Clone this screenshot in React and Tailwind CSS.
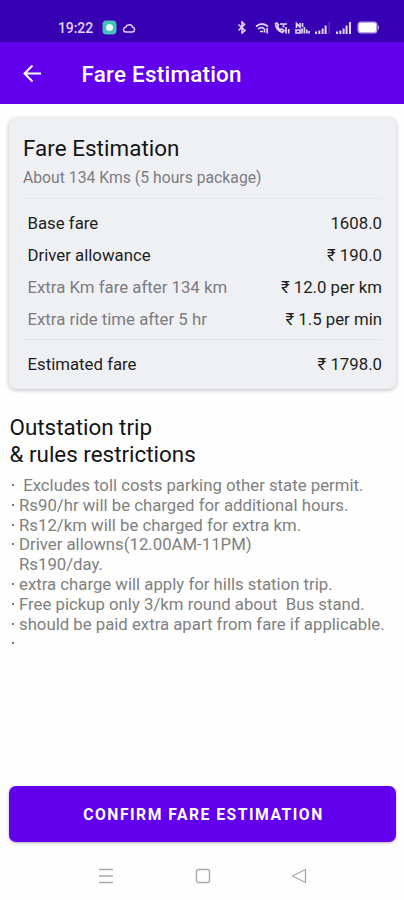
const fareRows = [
  { label: 'Base fare', value: '1608.0' },
  { label: 'Driver allowance', value: '₹ 190.0' },
  { label: 'Extra Km fare after 134 km', value: '₹ 12.0 per km', muted: true },
  { label: 'Extra ride time after 5 hr', value: '₹ 1.5 per min', muted: true },
];

const rules = [
  '\u00a0Excludes toll costs parking other state permit.',
  'Rs90/hr will be charged for additional hours.',
  'Rs12/km will be charged for extra km.',
  'Driver allowns(12.00AM-11PM)\nRs190/day.',
  'extra charge will apply for hills station trip.',
  'Free pickup only 3/km round about  Bus stand.',
  'should be paid extra apart from fare if applicable.',
  '',
];

function StatusBar() {
  return (
    <div className="flex h-[42px] shrink-0 items-center bg-[#3700b3] pt-[13px] pr-[24px] pl-[58px] text-[#e0d5f5]">
      <span className="w-[35px] text-[14px] leading-none font-medium tracking-[-0.1px]">19:22</span>
      <svg className="ml-[9px] h-[15px] w-[15px]" viewBox="0 0 15 15">
        <rect x="0.5" y="0.5" width="14" height="14" rx="4" fill="#45c0b8" />
        <circle cx="7.5" cy="7.5" r="3.5" fill="#e4fff5" />
      </svg>
      <svg className="ml-[5px] h-[10px] w-[14px]" viewBox="0 0 14 10" fill="none" stroke="currentColor" strokeWidth="1.5">
        <path d="M3.5 9h7a2.4 2.4 0 0 0 .3-4.7A3.8 3.8 0 0 0 3.7 4.1A2.5 2.5 0 0 0 3.5 9z" />
      </svg>
      <div className="ml-auto flex items-center">
        <svg className="h-[13px] w-[10px]" viewBox="0 0 10 13" fill="none" stroke="currentColor" strokeWidth="1.6">
          <path d="M1.5 3.5l6.5 6L5 12V1l2.5 2.5-6 6" />
        </svg>
        <svg className="ml-[8px] h-[12px] w-[14px]" viewBox="0 0 14 12" fill="none" stroke="currentColor" strokeWidth="1.7">
          <path d="M1 4.5q6-5 12 0M3 7q3-2.5 6-.5M5 9.5h3" />
          <path d="M9.5 6.5v4M12.2 6v5.5" />
        </svg>
        <svg className="ml-[5px] h-[12px] w-[16px]" viewBox="0 0 16 12" fill="none" stroke="currentColor" strokeWidth="1.7">
          <path d="M1.5 1.5q.5 7 7 9l1.5-2-2.5-1.5-1 1Q4 6 3.5 4.5L4.5 3 3 1zM6 2h7M9.5 2v3.5M12 5v6.5M14.7 7v4.5" />
        </svg>
        <svg className="ml-[5px] h-[12px] w-[15px]" viewBox="0 0 15 12" fill="none" stroke="currentColor" strokeWidth="1.7">
          <path d="M1.5 6V1.5L5 5V1M7.5 1v4M1 8h4v3H1zM7 11.5V6.5M9.4 11.5V5M11.8 11.5V7.5M14 11.5V9" />
        </svg>
        <svg className="ml-[5px] h-[12px] w-[15px]" viewBox="0 0 15 12" fill="currentColor">
          <path d="M0 9.5h2V12H0zM3.3 8.5h2V12h-2zM6.6 6.5h2V12h-2zM9.6 3.5h2V12h-2z" />
          <path d="M13.5 0h1.5v12h-1.5z" opacity="0.2" />
        </svg>
        <svg className="ml-[6px] h-[12px] w-[15px]" viewBox="0 0 15 12" fill="currentColor">
          <path d="M0 9.5h2V12H0zM3.3 8.5h2V12h-2zM6.6 6.5h2V12h-2zM9.6 3.5h2V12h-2zM13 0h2v12h-2z" />
        </svg>
        <svg className="ml-[6px] h-[13px] w-[23px]" viewBox="0 0 23 13">
          <rect x="0.5" y="0.5" width="20" height="12" rx="3.5" fill="#b9a5e6" />
          <rect x="2" y="2" width="17" height="9" rx="2" fill="#fff" />
          <path d="M21 4q2 2.5 0 5z" fill="#cdbdf0" />
        </svg>
      </div>
    </div>
  );
}

function AppBar() {
  return (
    <header className="flex h-[62px] shrink-0 items-center bg-[#6200ee] pl-[23px] text-white">
      <svg className="h-[19px] w-[19px]" viewBox="0 0 19 19" fill="none" stroke="currentColor" strokeWidth="2">
        <path d="M18 9.5H2M9.5 1.5l-8 8 8 8" />
      </svg>
      <h1 className="ml-[39.5px] pt-0.5 text-[22.4px] leading-none font-medium tracking-[0.25px]">Fare Estimation</h1>
    </header>
  );
}

function FareRow({ label, value, muted }) {
  return (
    <div className="flex h-8 items-center justify-between text-[16.8px]">
      <span className={muted ? 'text-[#7b7c80]' : 'text-[#1d1d20]'}>{label}</span>
      <span className="text-[#1d1d20]">{value}</span>
    </div>
  );
}

export default function App() {
  return (
    <div className="flex h-[900px] w-full flex-col bg-[#fefefe] font-['Roboto','Noto_Sans',sans-serif]">
      <StatusBar />
      <AppBar />

      <section className="mt-[14px] mr-[8px] ml-[9px] h-[271px] shrink-0 rounded-[7px] bg-[#eff0f4] px-[14px] pt-[17px] shadow-[0_1px_4px_rgba(0,0,0,0.28)]">
        <h2 className="text-[22.4px] leading-[26px] tracking-[0.05px] text-[#141416]">Fare Estimation</h2>
        <p className="mt-[7px] text-[15.7px] leading-[20px] tracking-[0.03px] text-[#7b7c80]">About 134 Kms (5 hours package)</p>
        <div className="mt-[10px] border-t border-[#e7e8ec] pt-[9px] pl-[4.5px]">
          {fareRows.map((row) => (
            <FareRow key={row.label} {...row} />
          ))}
        </div>
        <div className="mt-[3px] border-t border-[#e4e5e9] pt-[9px] pl-[4.5px]">
          <FareRow label="Estimated fare" value="₹ 1798.0" />
        </div>
      </section>

      <section className="pt-[25px] pl-[9.5px]">
        <h2 className="text-[22.4px] leading-[27px] text-[#141416]">
          Outstation trip
          <br />
          &amp; rules restrictions
        </h2>
        <ul className="mt-[8px] text-[16.75px] leading-[19.8px] text-[#808080]">
          {rules.map((rule, i) => (
            <li key={i} className="flex min-h-[19.8px]">
              <span className="mt-[8px] mr-[5px] ml-[2.5px] h-[2px] w-[2px] shrink-0 bg-[#777]" />
              <span className="whitespace-pre">{rule}</span>
            </li>
          ))}
        </ul>
      </section>

      <button className="mt-auto mr-[8px] ml-[9px] h-[56px] shrink-0 rounded-[7px] bg-[#6200ee] pt-px pl-[2px] text-[15.7px] font-bold tracking-[1.5px] text-white shadow-[0_1px_3px_rgba(0,0,0,0.3)]">
        CONFIRM FARE ESTIMATION
      </button>

      <nav className="flex h-[58px] shrink-0 items-center justify-between pr-[97px] pl-[98px] pt-[10px] text-[#a9a9a9]">
        <svg className="h-4 w-4" viewBox="0 0 16 16" fill="none" stroke="currentColor" strokeWidth="1.4">
          <path d="M1 1.5h14M1 8h14M1 14.5h14" />
        </svg>
        <svg className="h-4 w-4" viewBox="0 0 16 16" fill="none" stroke="currentColor" strokeWidth="1.4">
          <rect x="1.5" y="1.5" width="13" height="13" rx="2" />
        </svg>
        <svg className="h-4 w-4" viewBox="0 0 16 16" fill="none" stroke="currentColor" strokeWidth="1.3" strokeLinejoin="round">
          <path d="M1.5 8L14.5 1.5v13z" />
        </svg>
      </nav>
    </div>
  );
}
